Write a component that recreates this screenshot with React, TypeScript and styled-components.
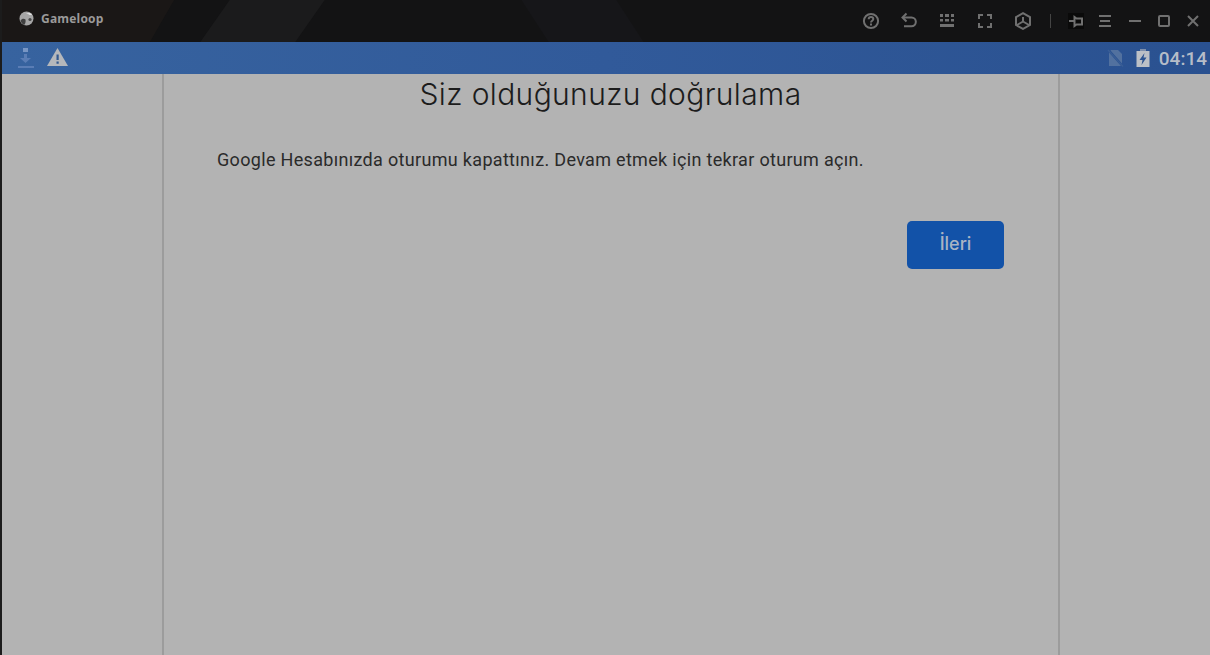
import React from 'react';
import styled, { createGlobalStyle } from 'styled-components';

const GlobalStyle = createGlobalStyle`
  html, body {
    margin: 0;
    padding: 0;
    height: 100%;
    overflow: hidden;
    background: #b3b3b3;
  }
  #root {
    height: 100%;
  }
`;

const IconStroke = styled.svg`
  display: block;
  fill: none;
  stroke: #707070;
  stroke-width: 2;
`;

const HelpIcon = () => (
  <IconStroke width="18" height="18" viewBox="0 0 18 18" strokeWidth="1.7">
    <circle cx="9" cy="9" r="7.1" />
    <path d="M6.7 7.2c0-1.400 1-2.200 2.300-2.200s2.300.8 2.300 2c0 1.700-2.300 1.700-2.300 3.500" />
    <path d="M9 11.600v1.800" />
  </IconStroke>
);

const BackIcon = () => (
  <IconStroke width="18" height="18" viewBox="0 0 18 18">
    <path d="M6.500 1.500 2.500 5.500l4 4" />
    <path d="M3 5.500h8.500a4.300 4.300 0 0 1 0 8.700H4" />
  </IconStroke>
);

const KeyboardIcon = () => (
  <svg width="14" height="14" viewBox="0 0 14 14" fill="#707070">
    <path d="M0 0h3v3H0zM5 0h4v3H5zM11 0h3v3h-3zM0 5h3v2.500H0zM5 5h4v2.500H5zM11 5h3v2.500h-3zM0 10h14v3H0z" />
  </svg>
);

const FullscreenIcon = () => (
  <IconStroke width="16" height="16" viewBox="0 0 16 16">
    <path d="M2 6V2h4M10 2h4v4M14 10v4h-4M6 14H2v-4" />
  </IconStroke>
);

const CubeIcon = () => (
  <IconStroke width="18" height="18" viewBox="0 0 18 18">
    <path d="M9 1.200 16 5.200v7.800L9 16.900 2 13V5.200z" />
    <path d="M9 5v4.500M9 9.500 3 13M9 9.500l6 3.500" />
  </IconStroke>
);

const PinIcon = () => (
  <IconStroke width="16" height="16" viewBox="0 0 16 16" strokeWidth="1.8" stroke="#858585">
    <path d="M1 8h5M6.500 4l2 1.500h5.500v6H8.500l-2 1.500z" />
  </IconStroke>
);

const MenuIcon = () => (
  <IconStroke width="12" height="12" viewBox="0 0 12 12" strokeWidth="1.6">
    <path d="M0 1h12M1 6h10M0 11h12" />
  </IconStroke>
);

const MinimizeIcon = () => (
  <IconStroke width="12" height="12" viewBox="0 0 12 12">
    <path d="M0 6h12" />
  </IconStroke>
);

const MaximizeIcon = () => (
  <IconStroke width="12" height="12" viewBox="0 0 12 12">
    <rect x="1" y="1" width="10" height="10" rx="1" />
  </IconStroke>
);

const CloseIcon = () => (
  <IconStroke width="12" height="12" viewBox="0 0 12 12">
    <path d="M1 1l10 10M11 1 1 11" />
  </IconStroke>
);

const Logo = () => (
  <svg width="15" height="15" viewBox="0 0 15 15">
    <circle cx="7.500" cy="7.500" r="7" fill="#a6a6a6" />
    <path d="M1.500 9.500C3 7.500 5 7.500 6.500 8.500 7 11 6 13.500 5 14 3.500 13.500 2 11.500 1.500 9.500z" fill="#3f3f3f" />
    <path d="M7 3c2-1.500 4.500-1.500 6 .5-1 .8-2.500.8-3 0C9 3 8 3 7 3z" fill="#e0e0e0" />
    <circle cx="11" cy="8.500" r="1.600" fill="#4a4a4a" />
  </svg>
);

const DownloadIcon = () => (
  <svg width="16" height="20" viewBox="0 0 16 20" fill="#5a7db5">
    <rect x="5" y="0" width="5" height="4" fill="#7896c4" />
    <path d="M6 6h3v4h4l-5.500 5L2 10h4z" />
    <rect x="0" y="18" width="16" height="2" />
  </svg>
);

const WarningIcon = styled(({ className }: { className?: string }) => (
  <svg className={className} width="21" height="18" viewBox="0 0 21 18">
    <path d="M10.500 0 21 18H0z" fill="#b5b7bb" />
    <path d="M9.500 6.500h2.200v5.500H9.500zM9.500 13.500h2.200v2.200H9.500z" fill="#33598f" />
  </svg>
))`
  margin: -2px 0 0 -1px;
`;

const NoSimIcon = () => (
  <svg width="17" height="18" viewBox="0 0 17 18" fill="#52719f">
    <path d="M4 1h7l4 4v9.500L3.500 1.500zM2 3.500 14 17H2z" />
    <path d="M1 1l15 16.500" stroke="#3a5f96" strokeWidth="1.200" fill="none" />
  </svg>
);

const BatteryIcon = () => (
  <svg width="14" height="18" viewBox="0 0 14 18">
    <rect x="4" y="0" width="6" height="2" fill="#7e8fab" />
    <path d="M0.500 2h13v16H.5z" fill="#bcc0c6" />
    <path d="M8.500 4 3.500 11h3L5.500 16l5-7.500h-3z" fill="#2e5592" />
  </svg>
);

const Page = styled.div`
  display: flex;
  flex-direction: column;
  height: 655px;
  width: 1210px;
  overflow: hidden;
  border-left: 2px solid #1c1c1c;
  box-sizing: border-box;
  background: #b3b3b3;
`;

const TitleBar = styled.header`
  position: relative;
  flex: 0 0 42px;
  display: flex;
  align-items: center;
  justify-content: space-between;
  overflow: hidden;
  background: #131314;
`;

const Facet = styled.div<{ $left: number; $width: number; $skew: number; $color: string }>`
  position: absolute;
  top: 0;
  bottom: 0;
  left: ${(p) => p.$left}px;
  width: ${(p) => p.$width}px;
  background: ${(p) => p.$color};
  transform: skewX(${(p) => p.$skew}deg);
`;

const Brand = styled.div`
  position: relative;
  display: flex;
  align-items: center;
  gap: 7px;
  padding: 0 0 6px 17px;
  font: 700 12px 'Open Sans', sans-serif;
  letter-spacing: 0.2px;
  color: #9a9a9a;
`;

const Controls = styled.div`
  position: relative;
  display: flex;
  align-items: center;
  padding: 0 2px 0 0;
`;

const ToolButton = styled.div<{ $width: number }>`
  width: ${(p) => p.$width}px;
  display: flex;
  justify-content: center;
  align-items: center;
`;

const Divider = styled.div`
  width: 1px;
  height: 14px;
  background: #444;
  margin: 0 11px 0 8px;
`;

const PinBox = styled.div`
  width: 16px;
  height: 16px;
  background: #0a0a0a;
  display: flex;
  align-items: center;
  justify-content: center;
`;

const StatusBar = styled.div`
  flex: 0 0 32px;
  display: flex;
  align-items: center;
  justify-content: space-between;
  background: linear-gradient(90deg, #37639f 0%, #315a9a 50%, #2a5190 100%);
`;

const StatusGroup = styled.div<{ $gap: number; $inset: number }>`
  display: flex;
  align-items: center;
  gap: ${(p) => p.$gap}px;
  padding-left: ${(p) => p.$inset}px;
`;

const Clock = styled.span`
  font: 500 19px 'Roboto', sans-serif;
  color: #b6bdc8;
  margin: 0 3px 0 -3px;
`;

const Content = styled.main`
  flex: 1;
  display: flex;
  padding-left: 160px;
`;

const Panel = styled.section`
  width: 898px;
  box-sizing: border-box;
  border-left: 2px solid #9c9c9c;
  border-right: 2px solid #9c9c9c;
  padding: 0 54px 0 53px;
  display: flex;
  flex-direction: column;
`;

const Heading = styled.h1`
  margin: -1px 0 0;
  text-align: center;
  font: 300 30px/42px 'Inter', sans-serif;
  letter-spacing: 0.37px;
  color: #1c1c1c;
`;

const Message = styled.p`
  margin: 32px 0 0;
  font: 400 18px/26px 'Roboto', sans-serif;
  letter-spacing: 0.32px;
  color: #2a2a2a;
`;

const Actions = styled.div`
  display: flex;
  justify-content: flex-end;
  margin-top: 48px;
`;

const NextButton = styled.button`
  width: 97px;
  height: 48px;
  border: 0;
  border-radius: 5px;
  padding: 0 0 3px;
  background: #1252a8;
  color: #aab4c4;
  font: 500 18px 'Inter', sans-serif;
`;

const App = () => {
  return (
    <>
      <GlobalStyle />
      <Page>
        <TitleBar>
          <Facet $left={-30} $width={190} $skew={-30} $color="#1a1716" />
          <Facet $left={213} $width={95} $skew={-35} $color="#1b1b1c" />
          <Facet $left={533} $width={95} $skew={33} $color="#161619" />
          <Brand>
            <Logo />
            Gameloop
          </Brand>
          <Controls>
            <ToolButton $width={38}><HelpIcon /></ToolButton>
            <ToolButton $width={38}><BackIcon /></ToolButton>
            <ToolButton $width={38}><KeyboardIcon /></ToolButton>
            <ToolButton $width={38}><FullscreenIcon /></ToolButton>
            <ToolButton $width={38}><CubeIcon /></ToolButton>
            <Divider />
            <ToolButton $width={28}><PinBox><PinIcon /></PinBox></ToolButton>
            <ToolButton $width={30}><MenuIcon /></ToolButton>
            <ToolButton $width={29}><MinimizeIcon /></ToolButton>
            <ToolButton $width={29}><MaximizeIcon /></ToolButton>
            <ToolButton $width={30}><CloseIcon /></ToolButton>
          </Controls>
        </TitleBar>
        <StatusBar>
          <StatusGroup $gap={14} $inset={16}>
            <DownloadIcon />
            <WarningIcon />
          </StatusGroup>
          <StatusGroup $gap={12} $inset={0}>
            <NoSimIcon />
            <BatteryIcon />
            <Clock>04:14</Clock>
          </StatusGroup>
        </StatusBar>
        <Content>
          <Panel>
            <Heading>Siz olduğunuzu doğrulama</Heading>
            <Message>Google Hesabınızda oturumu kapattınız. Devam etmek için tekrar oturum açın.</Message>
            <Actions>
              <NextButton>İleri</NextButton>
            </Actions>
          </Panel>
        </Content>
      </Page>
    </>
  );
};

export default App;
